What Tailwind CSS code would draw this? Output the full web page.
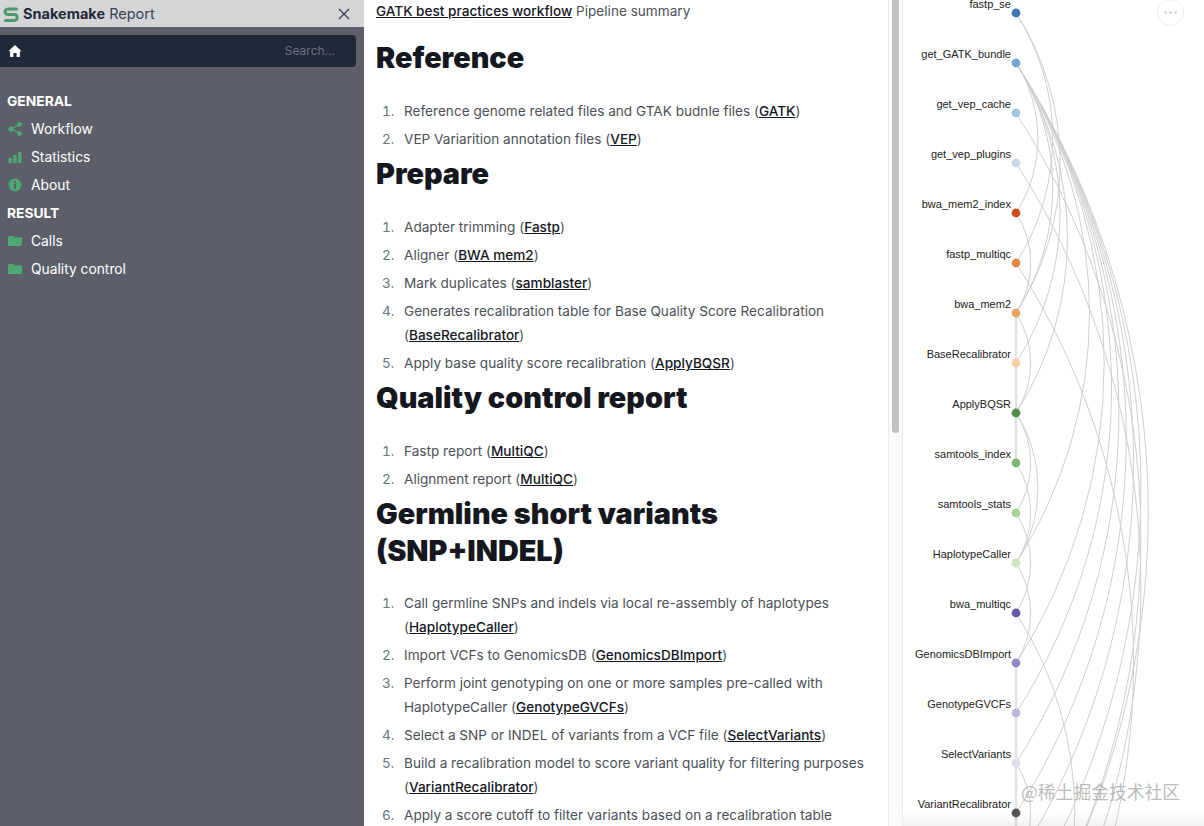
<!DOCTYPE html>
<html lang="en">
<head>
  <meta charset="UTF-8">
  <title>Snakemake Report</title>
  <script src="https://cdn.jsdelivr.net/npm/@tailwindcss/browser@4"></script>
</head>
<body class="h-screen overflow-hidden bg-white font-[Inter,sans-serif]">
  <div class="flex h-[826px] overflow-hidden">

    <!-- Sidebar -->
    <aside class="w-[364px] shrink-0 bg-[#5c5f6a]">
      <div class="flex h-[27px] items-center justify-between bg-[#d5d5d8] pl-[3px] pr-[14px]">
        <div class="flex items-center gap-[4px] text-[14.5px] text-[#374151]">
          <svg class="mt-[1px] w-[16px] h-[17px]" viewBox="0 0 16 17" fill="none" stroke="#4a9a6c" stroke-linecap="round">
            <path d="M13.5 3 H6.5 Q2 3 2 5.8 Q2 8.5 6 8.5 H10.5 Q14.2 8.5 14.2 11.4 Q14.2 14.4 10 14.4 H2.5" stroke-width="3"/>
          </svg>
          <span><b class="font-bold text-[#1f2937]">Snakemake</b> Report</span>
        </div>
        <svg class="w-[12px] h-[12px]" viewBox="0 0 12 12" fill="none" stroke="#374151" stroke-width="1.3"><path d="M1 1 L11 11 M11 1 L1 11"/></svg>
      </div>

      <div class="mt-[8px] mr-[8px] flex h-[32px] items-center justify-between rounded-r-[4px] bg-[#1f2937] pl-[8px] pr-[21px]">
        <svg class="w-[14px] h-[14px]" viewBox="0 0 14 14" fill="#fff"><path d="M7 1 L13.6 7.2 L11.9 7.2 L11.9 13 L8.6 13 L8.6 9 L5.4 9 L5.4 13 L2.1 13 L2.1 7.2 L0.4 7.2 Z"/></svg>
        <span class="text-[12px] text-[#6b7280]">Search...</span>
      </div>

      <nav class="mt-[20px] pl-[7px] text-[13.8px] leading-[28px] text-white">
        <div class="font-bold">GENERAL</div>
        <a class="flex items-center gap-[9px]">
          <svg class="ml-px w-[14px] h-[14px]" viewBox="0 0 14 14" fill="#4fa772" stroke="#4fa772"><path d="M11.5 2.5 L3 7 L11.5 11.5" fill="none" stroke-width="1.4"/><circle cx="3" cy="7" r="2.2"/><circle cx="11.5" cy="2.5" r="2"/><circle cx="11.5" cy="11.5" r="2"/></svg>
          Workflow
        </a>
        <a class="flex items-center gap-[9px]">
          <svg class="ml-px w-[14px] h-[14px]" viewBox="0 0 14 14" fill="#4fa772"><rect x="0.5" y="8" width="3.4" height="5" rx=".6"/><rect x="5.3" y="5" width="3.4" height="8" rx=".6"/><rect x="10.1" y="2" width="3.4" height="11" rx=".6"/></svg>
          Statistics
        </a>
        <a class="flex items-center gap-[9px]">
          <svg class="ml-px w-[14px] h-[14px]" viewBox="0 0 14 14"><circle cx="7" cy="7" r="6.5" fill="#4fa772"/><rect x="6" y="6" width="2" height="4.6" fill="#5c5f6a"/><circle cx="7" cy="4" r="1.2" fill="#5c5f6a"/></svg>
          About
        </a>
        <div class="font-bold">RESULT</div>
        <a class="flex items-center gap-[9px]">
          <svg class="ml-px w-[14px] h-[14px]" viewBox="0 0 14 14" fill="#4fa772"><path d="M0 3 Q0 2 1 2 H5.4 L6.8 3.4 H13 Q14 3.4 14 4.4 V11 Q14 12 13 12 H1 Q0 12 0 11 Z"/></svg>
          Calls
        </a>
        <a class="flex items-center gap-[9px]">
          <svg class="ml-px w-[14px] h-[14px]" viewBox="0 0 14 14" fill="#4fa772"><path d="M0 3 Q0 2 1 2 H5.4 L6.8 3.4 H13 Q14 3.4 14 4.4 V11 Q14 12 13 12 H1 Q0 12 0 11 Z"/></svg>
          Quality control
        </a>
      </nav>
    </aside>

    <!-- Report text -->
    <main class="w-[524px] shrink-0 overflow-hidden pl-[12px] pr-[20px] text-[13.6px] leading-[24px] text-[#4b4f58]">
      <p class="-mt-px"><a class="font-medium text-[#15171f] underline">GATK best practices workflow</a> Pipeline summary</p>

      <h1 class="mt-[16px] text-[28.8px] leading-[37px] font-black text-[#15171f]">Reference</h1>
      <ol class="mt-[23px] list-decimal pl-[22px] marker:text-[#6b7280] [&>li]:mb-[4px] [&>li]:pl-[6px]">
        <li>Reference genome related files and GTAK budnle files (<a class="font-medium text-[#15171f] underline">GATK</a>)</li>
        <li>VEP Variarition annotation files (<a class="font-medium text-[#15171f] underline">VEP</a>)</li>
      </ol>

      <h1 class="text-[28.8px] leading-[37px] font-black text-[#15171f]">Prepare</h1>
      <ol class="mt-[23px] list-decimal pl-[22px] marker:text-[#6b7280] [&>li]:mb-[4px] [&>li]:pl-[6px]">
        <li>Adapter trimming (<a class="font-medium text-[#15171f] underline">Fastp</a>)</li>
        <li>Aligner (<a class="font-medium text-[#15171f] underline">BWA mem2</a>)</li>
        <li>Mark duplicates (<a class="font-medium text-[#15171f] underline">samblaster</a>)</li>
        <li>Generates recalibration table for Base Quality Score Recalibration (<a class="font-medium text-[#15171f] underline">BaseRecalibrator</a>)</li>
        <li>Apply base quality score recalibration (<a class="font-medium text-[#15171f] underline">ApplyBQSR</a>)</li>
      </ol>

      <h1 class="text-[28.8px] leading-[37px] font-black text-[#15171f]">Quality control report</h1>
      <ol class="mt-[23px] list-decimal pl-[22px] marker:text-[#6b7280] [&>li]:mb-[4px] [&>li]:pl-[6px]">
        <li>Fastp report (<a class="font-medium text-[#15171f] underline">MultiQC</a>)</li>
        <li>Alignment report (<a class="font-medium text-[#15171f] underline">MultiQC</a>)</li>
      </ol>

      <h1 class="text-[28.8px] leading-[37px] font-black text-[#15171f]">Germline short variants (SNP+INDEL)</h1>
      <ol class="mt-[22px] list-decimal pl-[22px] marker:text-[#6b7280] [&>li]:mb-[4px] [&>li]:pl-[6px]">
        <li>Call germline SNPs and indels via local re-assembly of haplotypes (<a class="font-medium text-[#15171f] underline">HaplotypeCaller</a>)</li>
        <li>Import VCFs to GenomicsDB (<a class="font-medium text-[#15171f] underline">GenomicsDBImport</a>)</li>
        <li>Perform joint genotyping on one or more samples pre-called with HaplotypeCaller (<a class="font-medium text-[#15171f] underline">GenotypeGVCFs</a>)</li>
        <li>Select a SNP or INDEL of variants from a VCF file (<a class="font-medium text-[#15171f] underline">SelectVariants</a>)</li>
        <li>Build a recalibration model to score variant quality for filtering purposes (<a class="font-medium text-[#15171f] underline">VariantRecalibrator</a>)</li>
        <li>Apply a score cutoff to filter variants based on a recalibration table</li>
      </ol>
    </main>

    <!-- Scrollbar -->
    <div class="w-[15px] shrink-0 border-x border-[#ececec] bg-[#fafafa] pl-[3px]">
      <div class="h-[433px] w-[7px] rounded-b-full bg-[#c1c1c1]"></div>
    </div>

    <!-- Workflow graph -->
    <section class="relative flex-1 overflow-hidden">
      <svg id="graph" class="block" width="301" height="826" viewBox="903 0 301 826"></svg>
      <div class="absolute right-[20px] top-[-1px] flex h-[27px] w-[27px] items-center justify-center gap-[2px] rounded-full border border-[#ededed]">
        <i class="h-[3px] w-[3px] rounded-full bg-[#d8d8d8]"></i>
        <i class="h-[3px] w-[3px] rounded-full bg-[#d8d8d8]"></i>
        <i class="h-[3px] w-[3px] rounded-full bg-[#d8d8d8]"></i>
      </div>
      <div class="absolute inset-x-0 bottom-0 h-[14px] bg-gradient-to-t from-black/5 to-transparent"></div>
      <div class="absolute left-[118px] top-[778px] font-['Noto_Sans_CJK_SC',sans-serif] text-[17.8px] leading-[26px] whitespace-nowrap text-[#a9a9a9]/80">@稀土掘金技术社区</div>
    </section>
  </div>

  <script>
    var nodes = [
      ["fastp_se", "#3f74b5"], ["get_GATK_bundle", "#74a6d1"], ["get_vep_cache", "#a2c6e2"],
      ["get_vep_plugins", "#c9d9ea"], ["bwa_mem2_index", "#cf4a1e"], ["fastp_multiqc", "#e58a42"],
      ["bwa_mem2", "#eba45f"], ["BaseRecalibrator", "#f5d0a3"], ["ApplyBQSR", "#4d9149"],
      ["samtools_index", "#7cb873"], ["samtools_stats", "#a8d490"], ["HaplotypeCaller", "#cde6be"],
      ["bwa_multiqc", "#6459a8"], ["GenomicsDBImport", "#9189c3"], ["GenotypeGVCFs", "#b8b6de"],
      ["SelectVariants", "#dcdcec"], ["VariantRecalibrator", "#555555"]
    ];
    // [from, to] by node index, rows 17+ sit below the fold
    var edges = [
      [0,5],[0,6],[1,4],[1,6],[1,7],[1,8],[1,11],[1,13],[1,14],[1,15],[1,16],[1,17],[1,18],[1,19],
      [2,19],[3,20],[4,6],[5,21],[6,8],[8,10],[8,11],[9,11],[10,12],[11,13],[12,20],[15,17]
    ];
    var X = 1016, rowY = function (i) { return 13 + 50 * i; };
    var out = '<path d="M' + X + ' 313 V463 M' + X + ' 663 V826" stroke="#e2e2e2" stroke-width="2.5" fill="none"/>';
    edges.forEach(function (e) {
      var y1 = rowY(e[0]), y2 = rowY(e[1]), r = (y2 - y1) * 0.924;
      out += '<path d="M' + X + ' ' + y1 + ' A' + r + ' ' + r + ' 0 0 1 ' + X + ' ' + y2 + '" stroke="#cfcfcf" fill="none"/>';
    });
    nodes.forEach(function (n, i) {
      var y = rowY(i);
      out += '<circle cx="' + X + '" cy="' + y + '" r="4.4" fill="' + n[1] + '"/>';
      out += '<text x="1011" y="' + (y - 5.5) + '" text-anchor="end" font-family="Liberation Sans, sans-serif" font-size="11" fill="#222">' + n[0] + '</text>';
    });
    document.getElementById("graph").innerHTML = out;
  </script>
</body>
</html>
